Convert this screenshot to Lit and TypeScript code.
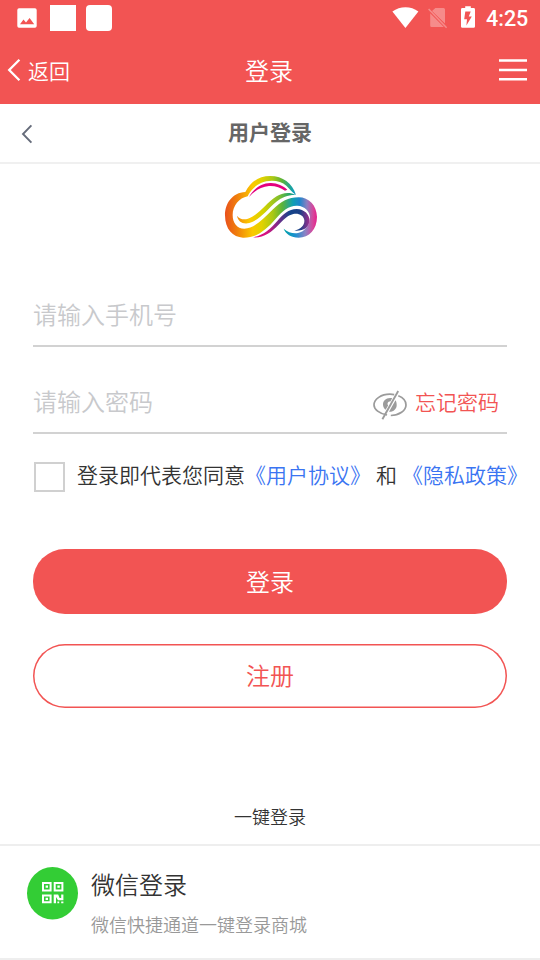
import { css, html, LitElement, svg } from 'lit';
import { customElement, property, state } from 'lit/decorators.js';

const font = css`'Noto Sans CJK SC', sans-serif`;

@customElement('status-bar')
export class StatusBar extends LitElement {
  @property({ type: String }) time: string = '';

  protected render() {
    return html`
      <svg class="picture" width="20" height="20" viewBox="0 0 20 20">
        <path
          fill="#fff"
          fill-rule="evenodd"
          d="M2 0.3H18A1.8 1.8 0 0 1 19.7 2V18A1.8 1.8 0 0 1 18 19.7H2A1.8 1.8 0 0 1 0.3 18V2A1.8 1.8 0 0 1 2 0.3ZM3 16.2H17.2L12.6 10L9 14.4L6.5 11.6Z"
        />
      </svg>
      <span class="block"></span>
      <span class="block rounded"></span>
      <span class="spacer"></span>
      <svg class="wifi" width="27" height="22" viewBox="0 0 27 22">
        <path fill="#fff" d="M0.4 4.6C8 -1.2 19 -1.2 26.4 4.6L13.4 21Z" />
      </svg>
      <svg class="sim" width="20" height="22" viewBox="0 0 20 22">
        <path fill="#fff" d="M7.4 1H15.5Q17 1 17 2.5V16.4L4 3.9ZM2.2 6.2L15.8 20H3.6Q2.2 20 2.2 18.5Z" />
        <path stroke="#fff" stroke-width="1.5" d="M0.6 2L18.6 20.8" />
      </svg>
      <svg class="battery" width="14" height="22" viewBox="0 0 14 22">
        <path
          fill="#fff"
          fill-rule="evenodd"
          d="M4.2 0.2H9.8V2H12.6Q14 2 14 3.4V20.4Q14 21.8 12.6 21.8H1.4Q0 21.8 0 20.4V3.4Q0 2 1.4 2H4.2ZM4.3 5.6L3.2 13.2H6L5.4 19.6L10.8 10.6H7.8L9.7 5.6Z"
        />
      </svg>
      <span class="time">${this.time}</span>
    `;
  }

  static styles = css`
    :host {
      box-sizing: border-box;
      display: flex;
      align-items: center;
      height: 36px;
      padding: 0 12px 0 17px;
      background-color: #f25453;
    }

    svg {
      display: block;
      flex: none;
    }

    .block {
      width: 26px;
      height: 26px;
      margin-left: 13px;
      background-color: #fff;
    }

    .block.rounded {
      margin-left: 10px;
      border-radius: 4px;
    }

    .spacer {
      flex: 1;
    }

    .wifi {
      margin-right: 9px;
    }

    .sim {
      margin-right: 13px;
      opacity: 0.32;
    }

    .battery {
      margin: -2px 11px 0 0;
    }

    .time {
      width: 42px;
      padding-top: 1px;
      white-space: nowrap;
      color: #fff;
      font: 500 21.5px/24px Roboto, sans-serif;
    }
  `;
}

@customElement('brand-logo')
export class BrandLogo extends LitElement {
  private stops(colors: [number, string][]) {
    return colors.map(([at, color]) => svg`<stop offset=${at} stop-color=${color} />`);
  }

  protected render() {
    return html`<svg width="110" height="85" viewBox="0 0 330 255">
      <defs>
        <linearGradient id="band" gradientUnits="userSpaceOnUse" x1="30" y1="0" x2="306" y2="0">
          ${this.stops([
            [0, '#e9511d'],
            [0.13, '#f07f0c'],
            [0.3, '#fbc900'],
            [0.4, '#e2d200'],
            [0.52, '#a9c815'],
            [0.62, '#5cb338'],
            [0.74, '#0e9fb4'],
            [0.81, '#1b86cc'],
            [0.89, '#8c7fc0'],
            [0.96, '#d8459b'],
            [1, '#e4218b'],
          ])}
        </linearGradient>
        <linearGradient id="arch" gradientUnits="userSpaceOnUse" x1="66" y1="0" x2="243" y2="0">
          ${this.stops([
            [0, '#f08a0c'],
            [0.22, '#fccb00'],
            [0.45, '#d3d300'],
            [0.7, '#86c02b'],
            [0.88, '#2ba765'],
            [1, '#0095b5'],
          ])}
        </linearGradient>
        <linearGradient id="inner" gradientUnits="userSpaceOnUse" x1="114" y1="0" x2="284" y2="0">
          ${this.stops([
            [0, '#e4007f'],
            [0.25, '#d4147f'],
            [0.48, '#65308a'],
            [0.65, '#15448a'],
            [0.83, '#1b3f86'],
            [1, '#a32c8c'],
          ])}
        </linearGradient>
        <linearGradient id="tail" gradientUnits="userSpaceOnUse" x1="206" y1="0" x2="306" y2="0">
          ${this.stops([
            [0, '#00a3a8'],
            [0.35, '#1b8fd0'],
            [0.65, '#8c82c4'],
            [0.88, '#d8459b'],
            [1, '#e4218b'],
          ])}
        </linearGradient>
      </defs>
      <path
        fill="url(#band)"
        d="M91 81C52 83 30 115 30 151C30 193 54 217 84 218C125 219 153 195 181 163C204 136 222 121 247 122C270 123 284 140 285 156L306 156C305 121 282 97 251 97C219 97 199 109 174 133C145 162 119 190 88 191C66 191 53 174 53 150C53 123 72 99 98 94C104 80 120 62 138 54C162 43 196 45 214 62C224 71 232 83 243 90C232 55 203 33 166 33C131 33 106 51 91 81Z"
      />
      <path
        fill="url(#arch)"
        d="M66 152C75 163 86 165 99 161C134 148 151 116 185 94C201 83 224 80 243 90C220 89 202 96 184 110C159 130 135 165 103 174C83 179 69 169 66 152Z"
      />
      <path
        fill="#e4007f"
        d="M102 96C117 71 140 53 168 54C187 55 205 62 217 74L210 77C196 67 180 62 162 63C138 65 119 77 102 96Z"
      />
      <path
        fill="url(#inner)"
        d="M113 217C144 212 166 192 187 168C204 147 221 132 245 132C268 132 284 149 284 168C283 188 264 199 238 197C257 192 269 181 268 166C266 151 251 144 235 147C217 151 204 166 190 180C169 202 145 220 113 217Z"
      />
      <path
        fill="url(#tail)"
        d="M306 155C306 193 282 218 251 218C229 218 211 206 206 191C219 202 235 207 249 204C269 200 284 180 285 155Z"
      />
    </svg>`;
  }

  static styles = css`
    :host,
    svg {
      display: block;
    }
  `;
}

@customElement('app-root')
export class AppRoot extends LitElement {
  @state() private agreed: boolean = false;

  protected render() {
    return html`
      <status-bar time="4:25"></status-bar>
      <header class="navbar">
        <div class="back">
          <svg width="14" height="24" viewBox="0 0 14 24">
            <path d="M12.4 1.8L2.2 12L12.4 22.2" fill="none" stroke="#fff" stroke-width="2.3" />
          </svg>
          <span>返回</span>
        </div>
        <div class="title">登录</div>
        <svg class="menu" width="28" height="22" viewBox="0 0 28 22">
          <path d="M0 1.5H28M0 11H28M0 20.3H28" stroke="#fff" stroke-width="2.4" />
        </svg>
      </header>
      <div class="subheader">
        <svg width="12" height="20" viewBox="0 0 12 20">
          <path d="M10.4 1.4L2 10L10.4 18.6" fill="none" stroke="#656b7a" stroke-width="1.9" />
        </svg>
        <div class="heading">用户登录</div>
      </div>
      <div class="hero"><brand-logo></brand-logo></div>
      <main class="form">
        <label class="field phone">请输入手机号</label>
        <div class="field password">
          <label>请输入密码</label>
          <div class="tools">
            <svg width="36" height="32" viewBox="0 0 36 32">
              <path
                d="M15.1 26C7.3 24.8 2 20.4 2 16C2 10 9.2 5.2 18 5.2C19.5 5.2 20.9 5.3 22.2 5.6M26.3 6.8C31.2 8.7 34 12.1 34 16C34 21.7 27.2 26.3 18.8 26.5"
                fill="none"
                stroke="#9b9b9b"
                stroke-width="1.7"
              />
              <path
                d="M20.2 9.2C14.8 8.1 10.8 11.3 11 15.8C11.1 17.8 12 19.6 13.6 20.8L16.1 16.4C14.9 14.8 15.8 12.5 18.4 12.6ZM23.5 11.2L17 22.8C21.3 23.2 24.7 20 24.7 16C24.7 14.2 24.4 12.6 23.5 11.2Z"
                fill="#9b9b9b"
              />
              <path d="M26.2 2L10.4 30.2" stroke="#9b9b9b" stroke-width="1.9" />
            </svg>
            <span class="forgot">忘记密码</span>
          </div>
        </div>
        <div class="agreement">
          <span class="checkbox" role="checkbox" aria-checked=${this.agreed} @click=${this.toggleHandler}></span>
          <span class="terms"
            >登录即代表您同意<a>《用户协议》</a><span class="and">和</span><a>《隐私政策》</a></span
          >
        </div>
        <div class="button primary">登录</div>
        <div class="button outline">注册</div>
      </main>
      <div class="quick">一键登录</div>
      <div class="wechat">
        <svg width="51" height="53" viewBox="0 0 51 53">
          <ellipse cx="25.5" cy="26.3" rx="25.5" ry="26.2" fill="#33cd35" />
          <path
            d="M16 16H23.6V23.4H16ZM27.7 16H35.4V23.4H27.7ZM16 28.5H23.6V35.2H16Z"
            fill="none"
            stroke="#fff"
            stroke-width="2"
          />
          <path
            d="M18.6 18.6H21V20.8H18.6ZM30.4 18.6H32.8V20.8H30.4ZM18.6 30.8H21V33H18.6ZM26.7 27.5H31.2L32.6 31H34.2V27.5H36.4V33.2H31L29 30V36.2H26.7ZM30.4 34.4H32.2V36.2H30.4ZM34.2 34.4H36.4V36.2H34.2Z"
            fill="#fff"
          />
        </svg>
        <div>
          <div class="name">微信登录</div>
          <div class="hint">微信快捷通道一键登录商城</div>
        </div>
      </div>
    `;
  }

  private toggleHandler() {
    this.agreed = !this.agreed;
  }

  static styles = css`
    :host {
      display: flex;
      flex-direction: column;
      height: 960px;
      overflow: hidden;
      background-color: #fff;
      color: #333;
      font-family: ${font};
      font-size: 21px;
      font-weight: 350;
    }

    svg {
      display: block;
      flex: none;
    }

    .navbar {
      box-sizing: border-box;
      display: grid;
      grid-template-columns: 1fr auto 1fr;
      align-items: center;
      height: 68px;
      padding: 0 13px 0 7px;
      background-color: #f25453;
      color: #fff;
    }

    .back {
      display: flex;
      align-items: center;
      gap: 7px;
      line-height: 30px;
    }

    .back span {
      padding-bottom: 1px;
    }

    .title {
      padding: 0 0 1px 4px;
      font-size: 24px;
      line-height: 34px;
    }

    .menu {
      justify-self: end;
    }

    .subheader {
      box-sizing: border-box;
      display: grid;
      grid-template-columns: 1fr auto 1fr;
      align-items: center;
      height: 60px;
      padding: 0 21px;
      border-bottom: 2px solid #f0f0f0;
    }

    .subheader svg {
      margin-top: 2px;
    }

    .heading {
      padding-bottom: 5px;
      color: #666;
      font-weight: bold;
      line-height: 30px;
    }

    .hero {
      display: flex;
      justify-content: center;
      height: 120px;
      padding-top: 1px;
    }

    .form {
      display: flex;
      flex-direction: column;
      padding: 0 33px;
    }

    .field {
      box-sizing: border-box;
      border-bottom: 2px solid #d2d2d2;
      color: #c8c9cc;
      font-size: 24px;
      line-height: 58px;
    }

    .phone {
      height: 62px;
    }

    .password {
      display: flex;
      justify-content: space-between;
      height: 62px;
      margin-top: 25px;
      padding-right: 8px;
    }

    .tools {
      display: flex;
      align-items: center;
      gap: 8px;
    }

    .tools svg {
      margin: 5px -1px 0 0;
    }

    .forgot {
      color: #f25453;
      font-size: 21px;
      line-height: 58px;
      padding-bottom: 2px;
    }

    .agreement {
      display: flex;
      align-items: center;
      height: 30px;
      margin: 28px -33px 0 1px;
    }

    .checkbox {
      box-sizing: border-box;
      flex: none;
      width: 31px;
      height: 30px;
      border: 2px solid #d0d0d0;
    }

    .terms {
      margin: -6px 0 0 12px;
      white-space: nowrap;
      line-height: 30px;
    }

    .terms a {
      color: #3a74f2;
    }

    .and {
      margin: 0 5px;
    }

    .button {
      height: 64.5px;
      border-radius: 32px;
      text-align: center;
      font-size: 24px;
      line-height: 64px;
    }

    .primary {
      margin-top: 57px;
      background-color: #f25453;
      color: #fff;
    }

    .outline {
      margin-top: 30px;
      box-shadow: inset 0 0 0 1.5px #f25453;
      color: #f25453;
      line-height: 62px;
    }

    .quick {
      box-sizing: border-box;
      height: 138px;
      padding-top: 95px;
      border-bottom: 2px solid #eee;
      text-align: center;
      font-size: 18px;
      line-height: 26px;
    }

    .wechat {
      box-sizing: border-box;
      display: flex;
      gap: 13px;
      height: 114px;
      padding: 21px 27px 0;
      border-bottom: 2px solid #eee;
    }

    .name {
      font-size: 24px;
      line-height: 34px;
    }

    .hint {
      margin-top: 10px;
      color: #999;
      font-size: 18px;
      line-height: 26px;
    }
  `;
}

declare global {
  interface HTMLElementTagNameMap {
    'status-bar': StatusBar;
    'brand-logo': BrandLogo;
    'app-root': AppRoot;
  }
}
